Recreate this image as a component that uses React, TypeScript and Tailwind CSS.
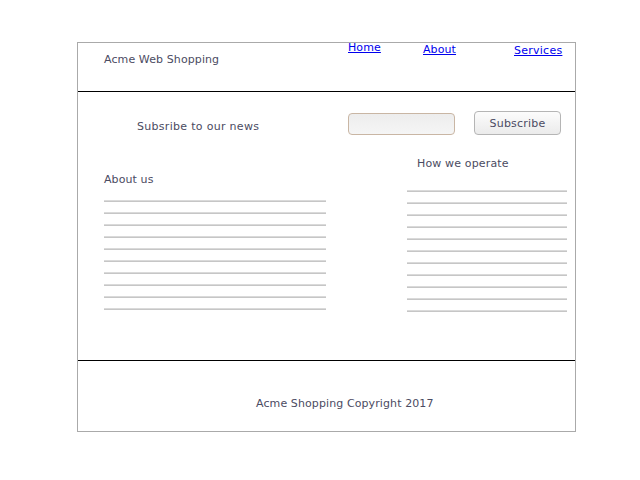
import React from "react";

const font = { fontFamily: "'DejaVu Sans', 'Liberation Sans', sans-serif" };

function Lines({ count, width }: { count: number; width: string }) {
  return (
    <div className={`flex flex-col gap-[10px] ${width}`}>
      {Array.from({ length: count }).map((_, i) => (
        <div key={i} className="h-[2px] border-t border-[#dadada] bg-[#c6c6c6]" />
      ))}
    </div>
  );
}

export default function App() {
  return (
    <div className="pt-[42px] pl-[77px] bg-white min-h-[480px] text-[11px] leading-[13px] text-[#4b4b62]" style={font}>
      <div className="w-[499px] border border-[#aaaaaa]">
        {/* Header */}
        <div className="h-[49px] border-b border-black flex items-start">
          <div className="w-[270px] pl-[26px] pt-[10px] tracking-[0.1px]">Acme Web Shopping</div>
          <div className="w-[75px] mt-[-2px]">
            <a href="#" className="text-[#0000ee] underline tracking-[0.1px]">Home</a>
          </div>
          <div className="w-[91px]">
            <a href="#" className="text-[#0000ee] underline tracking-[0.1px]">About</a>
          </div>
          <div className="mt-[1px]">
            <a href="#" className="text-[#0000ee] underline tracking-[0.25px]">Services</a>
          </div>
        </div>

        {/* Body */}
        <div className="h-[269px] pt-[19px] border-b border-black">
          <div className="flex items-start h-[24px]">
            <div className="w-[270px] pl-[59px] pt-[9px] tracking-[0.3px]">Subsribe to our news</div>
            <div className="w-[107px] h-[22px] mt-[2px] rounded-[4px] border border-[#c9b6a4] bg-linear-to-b from-[#ededed] to-[#f5f5f5]" />
            <button className="ml-[19px] w-[87px] h-[24px] rounded-[4px] border border-[#b5b5b5] bg-linear-to-b from-[#fcfcfc] to-[#ebebeb] text-[11px] leading-[13px] text-[#4b4b62] tracking-[0.2px]">
              Subscribe
            </button>
          </div>
          <div className="flex items-start">
            <div className="w-[329px] pl-[26px] pt-[38px]">
              <div className="tracking-[0.1px]">About us</div>
              <div className="mt-[14px]">
                <Lines count={10} width="w-[222px]" />
              </div>
            </div>
            <div className="pt-[22px]">
              <div className="ml-[10px] tracking-[0.15px]">How we operate</div>
              <div className="mt-[20px]">
                <Lines count={11} width="w-[160px]" />
              </div>
            </div>
          </div>
        </div>

        {/* Footer */}
        <div className="h-[70px] pl-[178px] pt-[36px] tracking-[0.1px]">Acme Shopping Copyright 2017</div>
      </div>
    </div>
  );
}
